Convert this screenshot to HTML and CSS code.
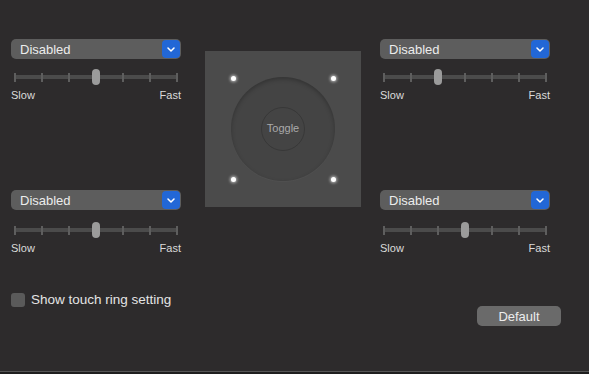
FILE: index.html
```html
<!DOCTYPE html>
<html lang="en">
<head>
    <meta charset="UTF-8">
    <meta name="viewport" content="width=device-width, initial-scale=1.0">
    <title>Touch Ring</title>
    <link rel="stylesheet" href="styles.css">
</head>
<body>
    <div class="window">
        <div class="top">
            <div class="column">
                <div class="control">
                    <div class="popup"><span>Disabled</span><span class="arrow"><svg width="8" height="5" viewBox="0 0 8 5"><path d="M1 1 L4 4 L7 1" fill="none" stroke="#fff" stroke-width="1.5" stroke-linecap="round" stroke-linejoin="round"/></svg></span></div>
                    <div class="slider">
                        <div class="ticks"><i></i><i></i><i></i><i></i><i></i><i></i><i></i></div>
                        <div class="knob" style="left: 50%;"></div>
                    </div>
                    <div class="scale"><span>Slow</span><span>Fast</span></div>
                </div>
                <div class="control control-low">
                    <div class="popup"><span>Disabled</span><span class="arrow"><svg width="8" height="5" viewBox="0 0 8 5"><path d="M1 1 L4 4 L7 1" fill="none" stroke="#fff" stroke-width="1.5" stroke-linecap="round" stroke-linejoin="round"/></svg></span></div>
                    <div class="slider">
                        <div class="ticks"><i></i><i></i><i></i><i></i><i></i><i></i><i></i></div>
                        <div class="knob" style="left: 50%;"></div>
                    </div>
                    <div class="scale"><span>Slow</span><span>Fast</span></div>
                </div>
            </div>

            <div class="ring-box">
                <span class="dot dot-tl"></span>
                <span class="dot dot-tr"></span>
                <span class="dot dot-bl"></span>
                <span class="dot dot-br"></span>
                <div class="ring">
                    <div class="ring-center">Toggle</div>
                </div>
            </div>

            <div class="column">
                <div class="control">
                    <div class="popup"><span>Disabled</span><span class="arrow"><svg width="8" height="5" viewBox="0 0 8 5"><path d="M1 1 L4 4 L7 1" fill="none" stroke="#fff" stroke-width="1.5" stroke-linecap="round" stroke-linejoin="round"/></svg></span></div>
                    <div class="slider">
                        <div class="ticks"><i></i><i></i><i></i><i></i><i></i><i></i><i></i></div>
                        <div class="knob" style="left: 33.33%;"></div>
                    </div>
                    <div class="scale"><span>Slow</span><span>Fast</span></div>
                </div>
                <div class="control control-low">
                    <div class="popup"><span>Disabled</span><span class="arrow"><svg width="8" height="5" viewBox="0 0 8 5"><path d="M1 1 L4 4 L7 1" fill="none" stroke="#fff" stroke-width="1.5" stroke-linecap="round" stroke-linejoin="round"/></svg></span></div>
                    <div class="slider">
                        <div class="ticks"><i></i><i></i><i></i><i></i><i></i><i></i><i></i></div>
                        <div class="knob" style="left: 50%;"></div>
                    </div>
                    <div class="scale"><span>Slow</span><span>Fast</span></div>
                </div>
            </div>
        </div>

        <div class="footer">
            <label class="check"><span class="box"></span>Show touch ring setting</label>
            <button class="default-btn">Default</button>
        </div>
    </div>
</body>
</html>
```

FILE: styles.css
```css
body {
    margin: 0;
    background-color: #1e1e1e;
    font-family: 'Liberation Sans', Arial, sans-serif;
    color: #e4e4e4;
}
.window {
    height: 372px;
    box-sizing: border-box;
    padding: 39px 0 0 11px;
    background-color: #2d2b2c;
    border-bottom: 1px solid #555;
}
.top {
    display: flex;
    align-items: flex-start;
}
.column {
    width: 170px;
    display: flex;
    flex-direction: column;
    gap: 88px;
}
.control {
    display: flex;
    flex-direction: column;
}
.popup {
    height: 20px;
    box-sizing: border-box;
    display: flex;
    align-items: center;
    justify-content: space-between;
    padding: 0 1px 0 9px;
    background-color: #5d5d5d;
    border-radius: 5px;
    font-size: 13px;
    color: #ececec;
}
.arrow {
    width: 18px;
    height: 18px;
    display: flex;
    align-items: center;
    justify-content: center;
    background-color: #2267d6;
    border-radius: 4px;
}
.slider {
    position: relative;
    height: 16px;
    margin: 10px 3px 0 3px;
}
.control-low .slider {
    margin-top: 12px;
}
.ticks {
    height: 100%;
    display: flex;
    align-items: center;
    justify-content: space-between;
    background: linear-gradient(#4b4b4b, #4b4b4b) center / 100% 4px no-repeat;
}
.ticks i {
    width: 2px;
    height: 9px;
    background-color: #5e5e5e;
}
.knob {
    position: absolute;
    top: 0;
    width: 8px;
    height: 16px;
    margin-left: -4px;
    border-radius: 4px;
    background-color: #9b9b9b;
}
.scale {
    display: flex;
    justify-content: space-between;
    margin-top: 3px;
    font-size: 11px;
    line-height: 14px;
    color: #dadada;
}
.ring-box {
    position: relative;
    width: 156px;
    height: 156px;
    margin: 12px 19px 0 24px;
    background-color: #4b4b4b;
    display: flex;
    align-items: center;
    justify-content: center;
}
.ring {
    width: 104px;
    height: 104px;
    border-radius: 50%;
    background-color: #444;
    box-shadow: inset 0 2px 4px rgba(0, 0, 0, 0.25), 0 1px 1px rgba(255, 255, 255, 0.03);
    display: flex;
    align-items: center;
    justify-content: center;
}
.ring-center {
    width: 44px;
    height: 44px;
    border-radius: 50%;
    border: 1px solid #383838;
    display: flex;
    align-items: center;
    justify-content: center;
    padding-bottom: 2px;
    box-sizing: border-box;
    font-size: 11px;
    color: #aaa;
}
.dot {
    position: absolute;
    width: 5px;
    height: 5px;
    border-radius: 50%;
    background-color: #fff;
    box-shadow: 0 0 3px 1px rgba(255, 255, 255, 0.6);
}
.dot-tl { left: 26px; top: 25px; }
.dot-tr { left: 126px; top: 25px; }
.dot-bl { left: 26px; top: 126px; }
.dot-br { left: 126px; top: 126px; }
.footer {
    display: flex;
    align-items: flex-start;
    justify-content: space-between;
    margin-top: 38px;
    padding-right: 28px;
}
.check {
    display: flex;
    align-items: center;
    gap: 6px;
    font-size: 13.5px;
    line-height: 14px;
    color: #e4e4e4;
}
.box {
    width: 14px;
    height: 14px;
    border-radius: 3px;
    background-color: #5a5a5a;
}
.default-btn {
    width: 84px;
    height: 20px;
    margin-top: 13px;
    padding: 0;
    border: none;
    border-radius: 5px;
    background-color: #6a6a6a;
    color: #ececec;
    font-family: 'Liberation Sans', Arial, sans-serif;
    font-size: 13px;
}
```
